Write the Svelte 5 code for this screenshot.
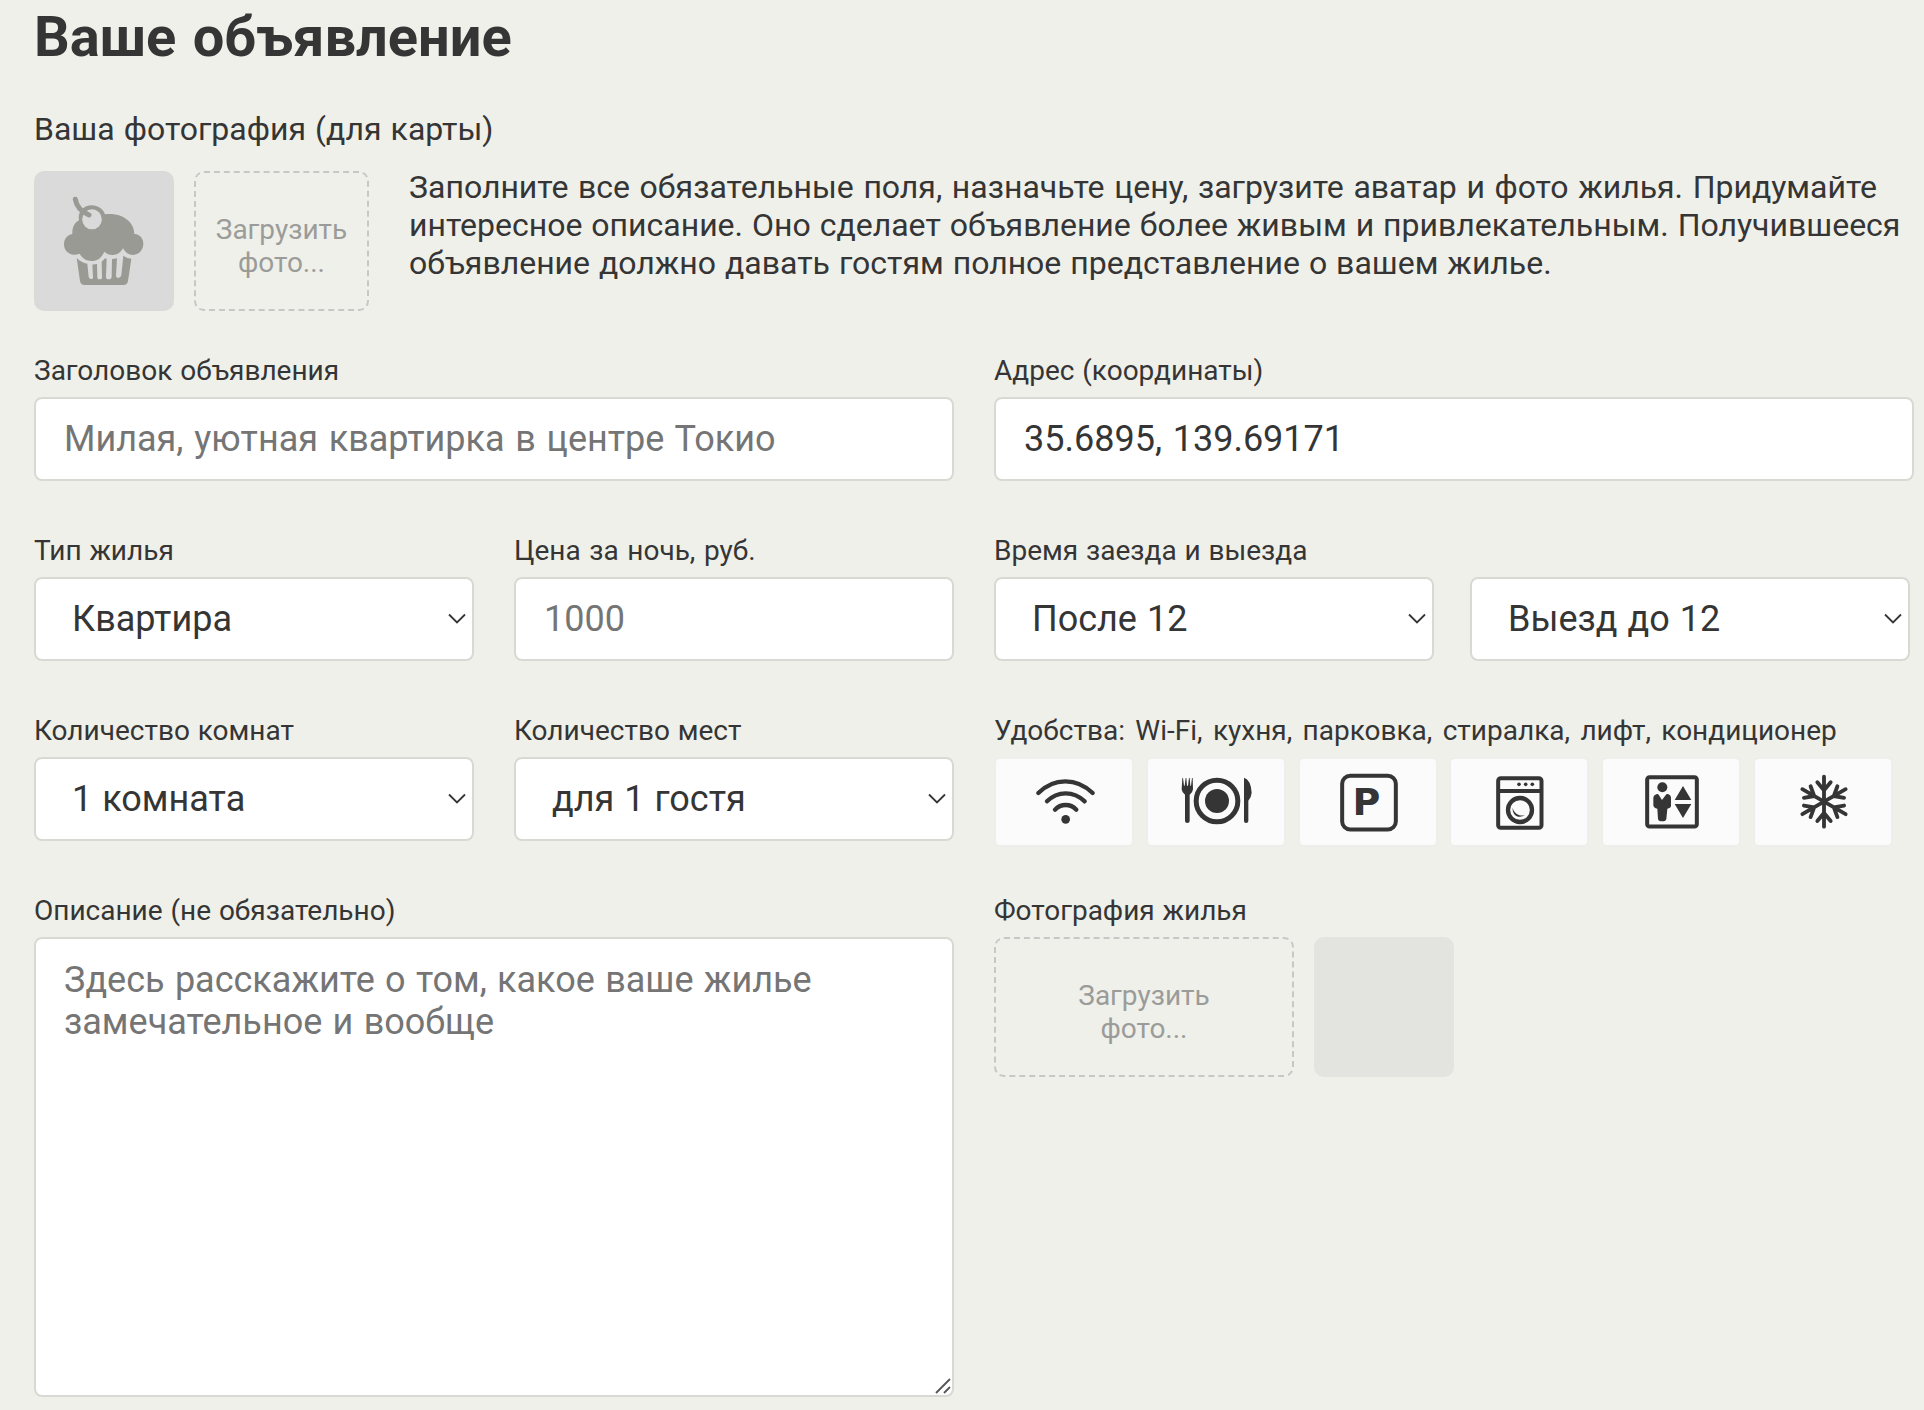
<script>
  let title = $state('');
  let price = $state('');
  let address = $state('35.6895, 139.69171');
  let description = $state('');

  const features = ['wifi', 'dishwasher', 'parking', 'washer', 'elevator', 'conditioner'];
  const flakeArms = [0, 60, 120, 180, 240, 300];
</script>

{#snippet dropdown(id, option, label)}
  <div class="select">
    <select {id} aria-label={label}>
      <option>{option}</option>
    </select>
    <svg class="chevron" viewBox="0 0 18 12" aria-hidden="true">
      <path d="M1 1.5 9 9.5 17 1.5" />
    </svg>
  </div>
{/snippet}

<form class="notice">
  <h1>Ваше объявление</h1>

  <section class="header">
    <h2>Ваша фотография (для карты)</h2>
    <div class="header-row">
      <div class="avatar">
        <svg viewBox="42 33 420 420" aria-hidden="true">
          <path
            class="cake"
            d="M157 222C156 204 163 188 177 181C172 154 192 136 215 136C234 136 249 147 255 163C302 156 343 183 343 222C382 225 377 284 339 285C326 285 316 278 309 265C302 278 291 285 278 285C268 285 259 281 253 275C245 293 233 303 215 303C198 303 186 294 179 281C151 291 132 275 132 253C132 237 142 225 157 222Z"
          />
          <path
            class="cake"
            d="M170 294C180 304 190 309 202 311L206 350Q207 357 213 357Q220 357 219 350L217 314C222 313 227 313 231 312L232 350Q232 358 239 358Q247 358 246 350L245 305Q251 301 255 295Q258 296 260 296L258 350Q258 358 266 358Q274 358 275 350L276 297Q283 297 291 295L288 346Q288 354 295 354Q302 354 304 346L310 287Q322 296 334 296L324 363Q322 375 310 375H194Q182 375 180 363Z"
          />
          <ellipse cx="216" cy="178" rx="29.5" ry="30" fill="#dadada" />
          <path class="stem" d="M166 118C170 143 186 156 207 165" />
        </svg>
      </div>
      <label class="drop-zone drop-zone-small">Загрузить<br />фото...</label>
      <p>
        <span class="lead">Заполните все обязательные поля, назначьте цену, загрузите аватар и фото жилья. Придумайте</span>
        интересное описание. Оно сделает объявление более живым и привлекательным. Получившееся
        объявление должно давать гостям полное представление о вашем жилье.
      </p>
    </div>
  </section>

  <div class="grid">
    <div class="field wide">
      <label for="title">Заголовок объявления</label>
      <input id="title" bind:value={title} placeholder="Милая, уютная квартирка в центре Токио" />
    </div>
    <div class="field wide">
      <label for="address">Адрес (координаты)</label>
      <input id="address" bind:value={address} />
    </div>

    <div class="field">
      <label for="type">Тип жилья</label>
      {@render dropdown('type', 'Квартира', 'Тип жилья')}
    </div>
    <div class="field">
      <label class="price-label" for="price">Цена за ночь, руб.</label>
      <input id="price" bind:value={price} placeholder="1000" />
    </div>
    <div class="field wide">
      <label for="timein">Время заезда и выезда</label>
      <div class="times">
        {@render dropdown('timein', 'После 12', 'Время заезда')}
        {@render dropdown('timeout', 'Выезд до 12', 'Время выезда')}
      </div>
    </div>

    <div class="field">
      <label for="rooms">Количество комнат</label>
      {@render dropdown('rooms', '1 комната', 'Количество комнат')}
    </div>
    <div class="field">
      <label for="capacity">Количество мест</label>
      {@render dropdown('capacity', 'для 1 гостя', 'Количество мест')}
    </div>
    <div class="field wide">
      <span class="caption features-caption">Удобства: Wi-Fi, кухня, парковка, стиралка, лифт, кондиционер</span>
      <div class="features">
        {#each features as feature}
          <div class="feature">
            {#if feature === 'wifi'}
              <svg viewBox="48 57 408 258">
                <g class="line wifi">
                  <path d="M175 159Q210 124 256 124T338 159" />
                  <path d="M201 184Q225 160 257 160T314 184" />
                  <path d="M225 209Q238 195 257 195T289 209" />
                </g>
                <circle cx="257" cy="238" r="13" />
              </svg>
            {:else if feature === 'dishwasher'}
              <svg viewBox="504 57 408 258">
                <circle class="line" cx="711" cy="183" r="62.5" stroke-width="15" />
                <circle cx="711" cy="183" r="36" />
                <path
                  d="M607 114H609L612 137H614L617 114H619L621 137H624L627 114H629L631 137H633L636 114H638L639 148Q638 158 629 164V243Q629 249 622 249Q615 249 615 243V164Q606 158 605 148Z"
                />
                <path d="M792 113Q813 120 815 158Q814 172 805 182V243Q805 249 798 249Q792 249 792 243Z" />
              </svg>
            {:else if feature === 'parking'}
              <svg viewBox="60 57 408 258">
                <rect class="line" x="186.500" y="107.500" width="161" height="161" rx="24" stroke-width="12" />
                <text x="217.500" y="225">P</text>
              </svg>
            {:else if feature === 'washer'}
              <svg viewBox="513 57 408 258">
                <rect class="line" x="654.500" y="114.500" width="130" height="149" rx="8" stroke-width="12" />
                <path d="M654 147H785V159H654Z" />
                <circle cx="717" cy="133" r="5.500" />
                <circle cx="737" cy="133" r="5.500" />
                <circle cx="757" cy="133" r="5.500" />
                <circle class="line" cx="720" cy="210" r="36" stroke-width="13" />
                <path d="M698 203C696 226 716 237 734 226C720 229 702 222 698 203Z" />
              </svg>
            {:else if feature === 'elevator'}
              <svg viewBox="39 57 408 258">
                <rect class="line" x="171.500" y="111.500" width="149" height="148" rx="7" stroke-width="12" />
                <circle cx="217" cy="142" r="15" />
                <path
                  d="M201 162L205 163L216 180L229 163L234 162Q243 165 243 174V198Q242 205 232 206L229 237Q228 244 217 244Q205 244 204 237L202 206Q191 205 190 196V174Q190 165 201 162Z"
                />
                <path d="M279 138L304 180H254ZM279 234L304 192H254Z" />
              </svg>
            {:else}
              <svg viewBox="495 57 408 258">
                {#each flakeArms as angle}
                  <path
                    class="line flake"
                    transform="rotate({angle} 702 185)"
                    d="M702 185V110M702 151L682 127M702 151L722 127"
                  />
                {/each}
              </svg>
            {/if}
          </div>
        {/each}
      </div>
    </div>

    <div class="field wide">
      <label for="description">Описание (не обязательно)</label>
      <div class="textarea">
        <textarea
          id="description"
          bind:value={description}
          placeholder="Здесь расскажите о том, какое ваше жилье замечательное и вообще"
        ></textarea>
        <svg class="grip" viewBox="0 0 16 16" aria-hidden="true">
          <path d="M1 15 15 1M9 15 15 9" />
        </svg>
      </div>
    </div>
    <div class="field wide">
      <span class="caption">Фотография жилья</span>
      <div class="photos">
        <label class="drop-zone drop-zone-large">Загрузить<br />фото...</label>
        <div class="photo"></div>
      </div>
    </div>
  </div>
</form>

<style>
  :global(body) {
    margin: 0;
    background: #eff0ea;
  }

  .notice {
    box-sizing: border-box;
    width: 1924px;
    height: 1410px;
    padding: 4px 0 0 34px;
    overflow: hidden;
    font-family: Roboto, 'Liberation Sans', sans-serif;
    color: #353535;
  }

  h1,
  h2,
  p {
    margin: 0;
  }

  h1 {
    font-size: 56px;
    line-height: 66px;
    font-weight: 700;
    word-spacing: 0.044em;
  }

  h2 {
    padding-top: 40px;
    font-size: 32px;
    line-height: 38px;
    font-weight: 400;
    word-spacing: 0.038em;
  }

  .header {
    height: 284px;
  }

  .header-row {
    display: flex;
    padding-top: 23px;
  }

  .avatar,
  .photo {
    width: 140px;
    height: 140px;
    border-radius: 10px;
    background: #dadada;
  }

  .avatar svg {
    display: block;
    width: 140px;
    height: 140px;
  }

  .cake {
    fill: #999a93;
  }

  .stem {
    fill: none;
    stroke: #999a93;
    stroke-width: 15;
    stroke-linecap: round;
  }

  .header-row p {
    width: 1500px;
    margin: -3px 0 0 40px;
    font-size: 32px;
    line-height: 38px;
    word-spacing: 0.032em;
  }

  .lead {
    word-spacing: 0.052em;
  }

  .drop-zone {
    box-sizing: border-box;
    height: 140px;
    padding-top: 40px;
    border: 2px dashed #c7c7c5;
    border-radius: 10px;
    font-size: 28px;
    line-height: 33px;
    text-align: center;
    color: #9b9c99;
  }

  .drop-zone-small {
    width: 175px;
    margin-left: 20px;
  }

  .drop-zone-large {
    width: 300px;
  }

  .grid {
    display: grid;
    grid-template-columns: repeat(4, 440px);
    gap: 53px 40px;
  }

  .field {
    display: flex;
    flex-direction: column;
    gap: 10px;
    height: 127px;
  }

  .wide {
    grid-column: span 2;
  }

  .field > label,
  .caption {
    font-size: 28px;
    line-height: 33px;
    word-spacing: 0.032em;
    white-space: nowrap;
  }

  .field > .price-label {
    word-spacing: 0.058em;
  }

  .features-caption {
    word-spacing: 0.122em;
  }

  input,
  select,
  textarea {
    box-sizing: border-box;
    display: block;
    width: 100%;
    height: 84px;
    margin: 0;
    padding: 0 28px;
    border: 2px solid #d9d9d4;
    border-radius: 8px;
    background: #fff;
    color: #353535;
    font: 36px/42px Roboto, 'Liberation Sans', sans-serif;
    word-spacing: 0.03em;
    appearance: none;
    outline: none;
  }

  input {
    word-spacing: 0.05em;
  }

  textarea {
    word-spacing: 0.038em;
  }

  input::placeholder,
  textarea::placeholder {
    color: #757575;
    opacity: 1;
  }

  .select {
    position: relative;
    width: 440px;
  }

  select {
    padding: 0 36px;
  }

  .chevron {
    position: absolute;
    top: 36px;
    right: 8px;
    width: 18px;
    height: 12px;
    fill: none;
    stroke: #353535;
    stroke-width: 1.8;
    pointer-events: none;
  }

  .times {
    display: flex;
    gap: 36px;
  }

  .features {
    display: flex;
    gap: 15.8px;
    padding: 2px 0 0 2px;
  }

  .feature {
    width: 136px;
    height: 86px;
    border-radius: 4px;
    background: #fbfbfb;
    box-shadow: 0 0 0 2px #eeeeec;
  }

  .feature svg {
    display: block;
    width: 136px;
    height: 86px;
    fill: #353535;
  }

  .feature text {
    font: 700 114px 'DejaVu Sans', sans-serif;
  }

  .line {
    fill: none;
    stroke: #353535;
    stroke-linecap: round;
  }

  .wifi {
    stroke-width: 13;
  }

  .flake {
    stroke-width: 11.5;
  }

  .textarea {
    position: relative;
  }

  textarea {
    height: 460px;
    padding: 20px 28px;
    resize: none;
  }

  .grip {
    position: absolute;
    right: 3px;
    bottom: 3px;
    width: 16px;
    height: 16px;
    fill: none;
    stroke: #555;
    stroke-width: 1.8;
  }

  .photos {
    display: flex;
    gap: 20px;
  }

  .photo {
    background: #e3e4df;
  }
</style>
